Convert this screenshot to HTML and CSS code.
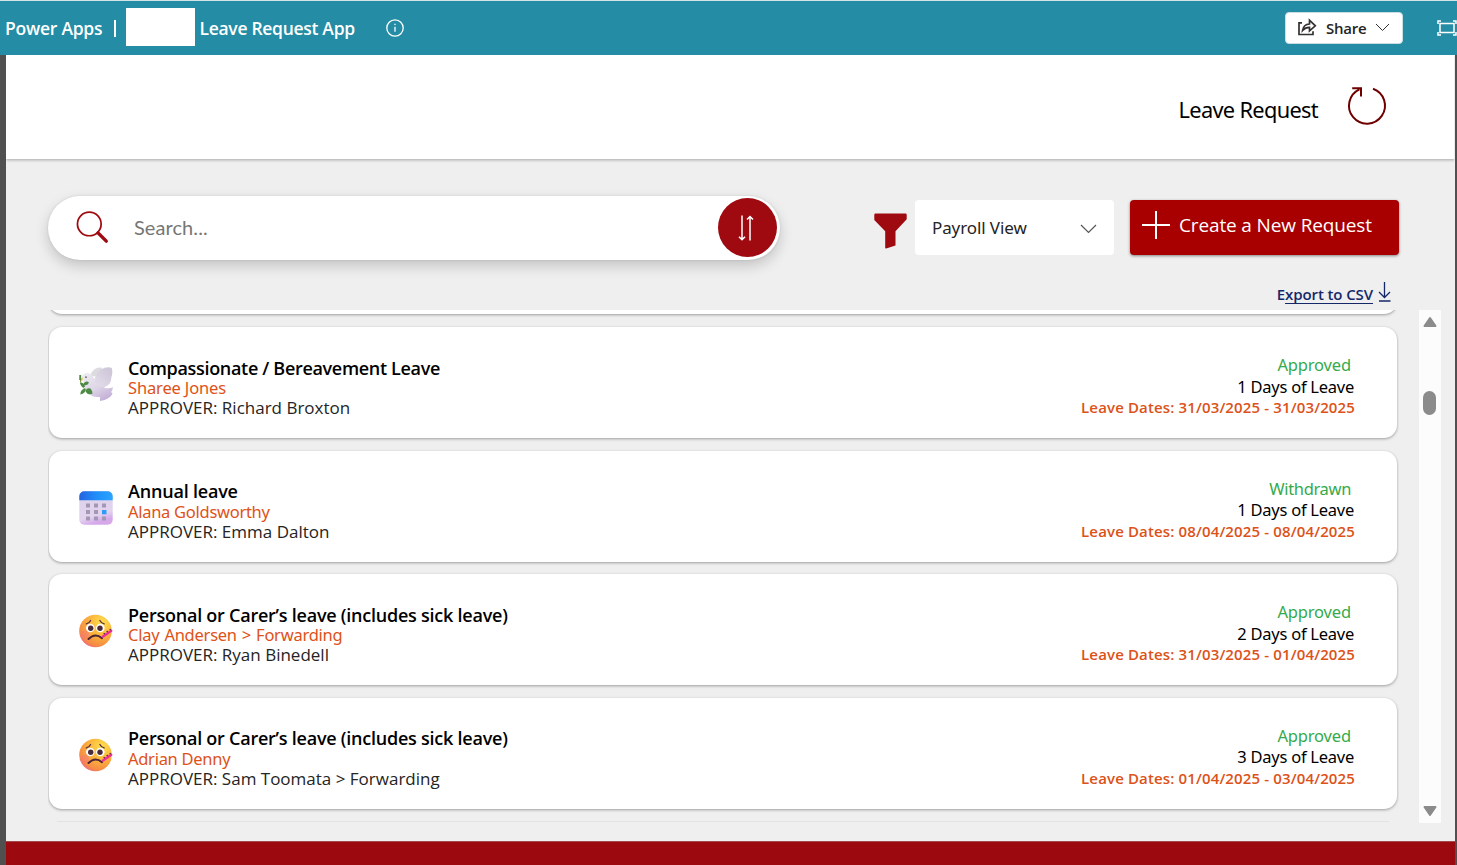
FILE: index.html
```html
<!DOCTYPE html>
<html lang="en">
<head>
<meta charset="utf-8">
<title>Leave Request App</title>
<link rel="stylesheet" href="styles.css">
</head>
<body>
<svg class="defs" width="0" height="0">
  <defs>
    <radialGradient id="face" cx=".7" cy=".25" r=".85"><stop offset="0" stop-color="#ffe04e"/><stop offset=".5" stop-color="#fbb13b"/><stop offset=".85" stop-color="#f58a45"/><stop offset="1" stop-color="#f0628a"/></radialGradient>
    <linearGradient id="calTop" x1="0" x2="1"><stop offset="0" stop-color="#2463e0"/><stop offset=".5" stop-color="#1f8dfa"/><stop offset="1" stop-color="#2ba4ff"/></linearGradient>
    <linearGradient id="calBody" x1="0" x2=".3" y2="1"><stop offset="0" stop-color="#dcd3ea"/><stop offset=".8" stop-color="#e2d3ef"/><stop offset="1" stop-color="#d5a8ea"/></linearGradient>
    <linearGradient id="bird" x2=".6" y2="1"><stop offset="0" stop-color="#efedf2"/><stop offset=".6" stop-color="#ded6e8"/><stop offset="1" stop-color="#c5b2d8"/></linearGradient>
    <linearGradient id="wing" x1="0" y1="1" x2="1" y2="0"><stop offset="0" stop-color="#e4deeb"/><stop offset="1" stop-color="#cbc3d6"/></linearGradient>
    <symbol id="sick" viewBox="0 0 34 34">
      <circle cx="16.500" cy="17" r="16.300" fill="url(#face)"/>
      <circle cx="6" cy="20.500" r="4" fill="#f4708a" opacity=".4"/>
      <circle cx="11.300" cy="14" r="4.300" fill="#fff"/><circle cx="21.300" cy="14" r="4.300" fill="#fff"/>
      <circle cx="11.700" cy="14.200" r="2.700" fill="#4a2b3c"/><circle cx="21" cy="14.200" r="2.700" fill="#4a2b3c"/>
      <path d="M7.300 9.800q3-.5 4.300-3.300M25.200 9.800q-3-.5-4.300-3.300" fill="none" stroke="#5b3044" stroke-width="1.300" stroke-linecap="round"/>
      <path d="M9.500 25q6.700-6.500 13.500-.8" fill="none" stroke="#4b2639" stroke-width="2" stroke-linecap="round"/>
      <path d="M24 22.500L32.300 16.800" stroke="#ee2a9b" stroke-width="2.300" stroke-linecap="round"/>
      <path d="M24.800 19l.8 1.200M27.800 16.900l.8 1.200M30.800 15l.8 1.200" stroke="#49264c" stroke-width="1.200"/>
    </symbol>
    <symbol id="calendar" viewBox="0 0 34 34">
      <rect x=".3" y=".3" width="33.400" height="33.400" rx="5" fill="url(#calBody)"/>
      <path d="M.3 9.300V5.300a5 5 0 0 1 5-5h23.400a5 5 0 0 1 5 5v4z" fill="url(#calTop)"/>
      <path d="M7 12.500h4v4H7zM15 12.500h4v4h-4zM23 12.500h4v4h-4zM7 19h4v4H7zM15 19h4v4h-4zM7 25.500h4v4H7zM15 25.500h4v4h-4zM23 25.500h4v4h-4z" fill="#a398b4"/>
      <path d="M23 19h4.500v4.300H23z" fill="#2f9bf6"/>
    </symbol>
    <symbol id="dove" viewBox="0 0 34 34">
      <path d="M12 6.500Q16-.5 23 .7L22 10 12 9z" fill="#dcdcdf"/>
      <path d="M2 11.500Q3.500 6 8.500 6q4.500.5 6 4.500L20 16l6 5q4.500 1 8-.8-.5 3.500-2 5 1.500.2 1.500 1.200-2 5.600-12.500 7.600v-4Q12 30.500 8 25 4 19 4.500 13.500z" fill="url(#bird)"/>
      <path d="M15.500 15Q16 4 25.500.8q4.500-1.200 7.200.2 1.500 5-.5 10 .5 6-6.500 9Q18 20 15.500 15z" fill="url(#wing)"/>
      <circle cx="7" cy="10.200" r=".9" fill="#6b6570"/>
      <path d="M0 13l3.500-2.500v3.200z" fill="#f8b72b"/>
      <path d="M1.600 8Q.5 17 5 21.500T11 26" fill="none" stroke="#6b8d38" stroke-width="1"/>
      <path d="M1 16q4-1 5 4-4 1-5-4zM4 17.500q2.500-4.500 6-2-1.500 4-6 2zM1.300 27.500Q1.500 22 6.500 21.500q.5 5-5.200 6zM6.500 24.500q1-4.500 5-3 2.500 3 2 5.300-5 1.500-7-2.300zM.3 8h1.800v5H.3z" fill="#4d8b45"/>
    </symbol>
  </defs>
</svg>

<header class="topbar">
  <span class="brand">Power Apps</span>
  <span class="divider"></span>
  <span class="logo-box"></span>
  <span class="app-name">Leave Request App</span>
  <svg class="info" viewBox="0 0 18 18"><circle cx="9" cy="9" r="8.200"/><path d="M9 7.700v5M9 4.700v1.300"/></svg>
  <button class="share">
    <svg class="share-icon" viewBox="0 0 20 18"><path d="M5 4.800H2v11.700h14v-3.300M5.600 12.300Q6.500 6.400 12.500 6V2.200l5.800 5.600-5.800 5V9.300Q8.500 9.200 5.600 12.300z"/></svg>
    <span class="share-text">Share</span>
    <svg class="chev" viewBox="0 0 15 9"><path d="M1 1l6.500 6.500L14 1"/></svg>
  </button>
  <svg class="fit" viewBox="0 0 20 16"><path d="M3 3.500h14v9H3z"/><path d="M1 4V1h3M16 1h3v3M19 12v3h-3M4 15H1v-3"/></svg>
</header>

<div class="stage">
  <main class="app">
    <section class="app-header">
      <h1 class="app-title">Leave Request</h1>
      <svg class="refresh" viewBox="0 0 42 42"><path d="M27 3.700A18 18 0 1 1 13.500 4.300M6.200 3.300h8.800v8.300"/></svg>
    </section>

    <section class="toolbar">
      <div class="search">
        <svg class="magnifier" viewBox="0 0 34 34"><circle cx="13.700" cy="13.300" r="12.200"/><path d="M22.700 22.500l8.500 8.500"/></svg>
        <span class="placeholder">Search...</span>
        <button class="sort"><svg width="18" height="28" viewBox="0 0 18 28"><path d="M5 1.500v24M2 22.700l3 3 3-3M13 26.500V3M10 5.500l3-3 3 3"/></svg></button>
      </div>
      <svg class="funnel" viewBox="0 0 33 36"><path d="M1.500.5h30q1.200 0 1.200 1.200v4.600L21.500 18.200v14.300L12.200 35.500q-1 .2-1-.8V18.200L.3 7V1.700Q.3.500 1.500.5z"/></svg>
      <div class="select"><span class="select-text">Payroll View</span><svg class="select-chev" viewBox="0 0 17 10"><path d="M1 1l7.500 7.500L16 1"/></svg></div>
      <button class="create"><svg class="plus" viewBox="0 0 28 28"><path d="M14 0v28M0 14h28"/></svg><span class="create-text">Create a New Request</span></button>
    </section>

    <div class="export"><a class="export-text">E<u>xport to CSV</u></a><svg class="download" viewBox="0 0 13 20"><path d="M6.500 0v15.500M1 10l5.500 5.500L12 10M1 19h11.500"/></svg></div>

    <section class="list">
      <div class="cards">
        <article class="card previous"></article>
        <article class="card">
          <svg class="emoji"><use href="#dove"/></svg>
          <div class="details"><h2 class="type compassionate">Compassionate / Bereavement Leave</h2><p class="person sharee">Sharee Jones</p><p class="approver">APPROVER: Richard Broxton</p></div>
          <div class="summary"><p class="status">Approved</p><p class="days">1 Days of Leave</p><p class="dates">Leave Dates: 31/03/2025 - 31/03/2025</p></div>
        </article>
        <article class="card">
          <svg class="emoji"><use href="#calendar"/></svg>
          <div class="details"><h2 class="type annual">Annual leave</h2><p class="person alana">Alana Goldsworthy</p><p class="approver">APPROVER: Emma Dalton</p></div>
          <div class="summary"><p class="status withdrawn">Withdrawn</p><p class="days">1 Days of Leave</p><p class="dates">Leave Dates: 08/04/2025 - 08/04/2025</p></div>
        </article>
        <article class="card">
          <svg class="emoji"><use href="#sick"/></svg>
          <div class="details"><h2 class="type">Personal or Carer’s leave (includes sick leave)</h2><p class="person clay">Clay Andersen &gt; Forwarding</p><p class="approver">APPROVER: Ryan Binedell</p></div>
          <div class="summary"><p class="status">Approved</p><p class="days">2 Days of Leave</p><p class="dates">Leave Dates: 31/03/2025 - 01/04/2025</p></div>
        </article>
        <article class="card">
          <svg class="emoji"><use href="#sick"/></svg>
          <div class="details"><h2 class="type">Personal or Carer’s leave (includes sick leave)</h2><p class="person alana">Adrian Denny</p><p class="approver">APPROVER: Sam Toomata &gt; Forwarding</p></div>
          <div class="summary"><p class="status">Approved</p><p class="days">3 Days of Leave</p><p class="dates">Leave Dates: 01/04/2025 - 03/04/2025</p></div>
        </article>
        <div class="next-edge"></div>
      </div>
      <div class="scrollbar">
        <svg width="16" height="12" viewBox="0 0 16 12"><path d="M8 2l5.500 8h-11z"/></svg>
        <span class="thumb"></span>
        <svg class="down" width="16" height="12" viewBox="0 0 16 12"><path d="M2.500 2h11L8 10z"/></svg>
      </div>
    </section>
    <footer class="footer"></footer>
  </main>
</div>
</body>
</html>
```
FILE: styles.css
```css
* { box-sizing: border-box; margin: 0; padding: 0; }
body {
  width: 1457px; height: 865px; overflow: hidden;
  display: flex; flex-direction: column;
  font-family: "Noto Sans", "Open Sans", sans-serif; color: #000;
}
.defs { position: absolute; }
svg { display: block; flex: none; }
button { border: 0; font: inherit; }
span, p, h1, h2, a { white-space: nowrap; }

.topbar {
  flex: none; height: 55px; display: flex; align-items: center;
  padding-left: 5px; background: #248ca4; border-top: 1px solid #d3e3e6; color: #fff;
}
.brand, .app-name { font-family: "Open Sans", sans-serif; font-size: 17.500px; font-weight: 600; line-height: 24px; }
.brand { width: 109px; letter-spacing: -.25px; }
.divider { width: 1.500px; height: 17px; background: #fff; }
.logo-box { width: 69px; height: 38px; margin: -3px 5px 0 10px; background: #fff; }
.app-name { letter-spacing: -.3px; width: 186px; }
.info { width: 18px; height: 18px; margin-top: -1px; fill: none; stroke: #fff; stroke-width: 1.300; }
.share {
  display: flex; align-items: center; width: 118px; height: 32px; margin-left: auto; margin-top: -1px;
  padding: 0 11px; background: #fff; border: 1px solid #c9dfe3; border-radius: 4px; color: #252423;
}
.share-icon { width: 20px; height: 18px; fill: none; stroke: #323130; stroke-width: 1.700; margin-top: -2px; }
.share-text { font-family: "Open Sans", sans-serif; font-weight: 600; font-size: 15px; width: 49px; margin-left: 9px; text-align: left; letter-spacing: -.25px; }
.chev { width: 15px; height: 9px; fill: none; stroke: #323130; }
.fit { width: 20px; height: 16px; margin: 0 0 0 34px; fill: none; stroke: #fff; stroke-width: 1.500; }

.stage { flex: 1; display: flex; background: #505050; padding: 0 2.500px 0 6px; }
.app { flex: 1; min-width: 0; display: flex; flex-direction: column; background: #efefef; }
.app-header {
  flex: none; height: 104px; display: flex; align-items: center; justify-content: flex-end;
  padding-right: 67px; background: #fff; box-shadow: 0 1px 3px rgba(0,0,0,.3); clip-path: inset(0 0 -5px 0);
}
.app-title { font-size: 21.800px; font-weight: 400; letter-spacing: -.68px; margin-top: 5px; }
.refresh { width: 42px; height: 42px; margin: -3px 0 0 27.500px; fill: none; stroke: #700000; stroke-width: 2; }

.toolbar { flex: none; height: 64px; margin: 37px 55.500px 0 42px; display: flex; align-items: center; }
.search {
  width: 731.500px; height: 64px; display: flex; align-items: center; padding: 0 3px 0 28px;
  background: #fff; border-radius: 32px; box-shadow: 0 6px 14px rgba(0,0,0,.18), 0 0 3px rgba(0,0,0,.1);
}
.magnifier { width: 33px; height: 33px; margin-top: -1px; fill: none; stroke: #9f0a10; stroke-width: 1.800; }
.magnifier path { stroke-width: 3.500; stroke-linecap: round; }
.placeholder { flex: 1; padding-left: 25px; margin-top: -3px; font-family: Lato, sans-serif; font-size: 20px; color: #767676; letter-spacing: .08px; }
.sort { width: 59px; height: 59px; border-radius: 50%; background: #9f0a10; display: grid; place-items: center; margin-top: -1px; }
.sort svg { margin-left: -2px; fill: none; stroke: #fff; stroke-width: 1.500; }
.funnel { width: 33px; height: 36px; margin: 5px 8px 0 94.500px; fill: #9f0a10; }
.select { width: 199px; height: 55px; margin-top: -1px; display: flex; align-items: center; justify-content: space-between; padding: 0 17px; background: #fff; border-radius: 4px; }
.select-text { font-size: 17px; color: #252423; letter-spacing: -.1px; }
.select-chev { width: 17px; height: 10px; fill: none; stroke: #555; stroke-width: 1.200; margin-top: 2px; }
.create { width: 269px; height: 55px; margin-top: -1px; margin-left: auto; display: flex; align-items: center; padding: 0 12px; background: #a80000; color: #fff; border-radius: 4px; box-shadow: 0 1px 3px rgba(0,0,0,.45); }
.plus { width: 28px; height: 28px; stroke: #fff; stroke-width: 2; margin-top: -5px; }
.create-text { font-family: "Open Sans", sans-serif; font-size: 19px; letter-spacing: -.14px; margin: -6px 0 0 9px; }

.export { flex: none; height: 50px; display: flex; justify-content: flex-end; padding: 22px 63.500px 0 0; color: #15296a; }
.export-text { font-family: "Open Sans", sans-serif; font-weight: 600; font-size: 15px; line-height: 25px; margin-right: 5px; letter-spacing: -.1px; }
.export-text u { text-underline-offset: 3px; text-decoration-thickness: 1px; text-decoration-skip-ink: none; }
.download { width: 13px; height: 20px; fill: none; stroke: #15296a; stroke-width: 1.300; }

.list { flex: none; height: 513px; display: flex; justify-content: space-between; padding: 0 13.500px 0 42px; }
.cards { width: 1351px; padding: 0 2px 0 1.400px; overflow: hidden; display: flex; flex-direction: column; gap: 12.600px; }
.card {
  flex: none; height: 111px; display: flex; padding: 0 42px 0 29.600px;
  background: #fff; border-radius: 13px; box-shadow: 0 1px 3px rgba(0,0,0,.35);
}
.card.previous { height: 105px; margin-top: -100.600px; }
.emoji { width: 34px; height: 34px; margin-top: 40px; }
.details { flex: 1; padding: 30.600px 0 0 15px; }
.type, .person, .approver { height: 20px; line-height: 20px; }
.type { height: 20.400px; font-family: "Open Sans", sans-serif; font-size: 18px; font-weight: 600; letter-spacing: -.24px; }
.type.compassionate { letter-spacing: -.32px; }
.type.annual { letter-spacing: -.2px; }
.person { font-size: 16.500px; color: #de5218; letter-spacing: -.18px; }
.person.sharee { letter-spacing: -.15px; }
.person.alana { letter-spacing: -.28px; }
.person.clay { word-spacing: 1px; letter-spacing: -.25px; }
.approver { font-family: "Open Sans", sans-serif; font-size: 17px; color: #252423; }
.summary { display: flex; flex-direction: column; align-items: flex-end; padding-top: 27px; }
.status, .days { height: 21.500px; line-height: 22px; font-size: 16.500px; }
.status { color: #35aa4c; padding-right: 4px; letter-spacing: -.15px; }
.status.withdrawn { letter-spacing: -.35px; }
.days { padding-right: 1px; letter-spacing: -.25px; }
.dates { font-family: "Open Sans", sans-serif; font-weight: 600; font-size: 15px; letter-spacing: .14px; line-height: 20.400px; color: #dc5218; }
.next-edge { flex: none; height: 1px; margin: 0 8px; background: #e3e3e3; }
.scrollbar { width: 22px; background: #fcfcfc; display: flex; flex-direction: column; align-items: center; padding: 6px 0; }
.scrollbar svg { fill: #8b8b8b; stroke: #8b8b8b; stroke-width: 2; stroke-linejoin: round; }
.thumb { width: 13px; height: 24px; margin: 63px 1px 0 0; border-radius: 7px; background: #8b8b8b; }
.down { margin-top: auto; }
.footer { margin-top: auto; height: 24px; background: #9c090e; border-top: 1px solid #a04a4c; }
```
